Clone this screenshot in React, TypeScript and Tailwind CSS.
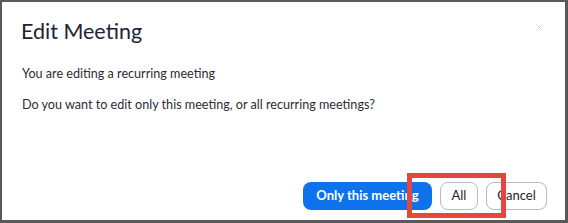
import { X } from "lucide-react";

export default function App() {
  return (
    <div
      className="relative h-[223px] w-[568px] border-b-[3px] border-l-2 border-r-[3px] border-t-2 border-[#595959] bg-white"
      style={{ fontFamily: "Lato, 'Noto Sans', sans-serif" }}
    >
      <div className="flex h-full flex-col">
        <div className="flex items-start justify-between pl-[19px] pr-[20px] pt-[14px]">
          <h1 className="text-[21.5px] leading-[30px] text-[#232333]">Edit Meeting</h1>
          <X size={11} strokeWidth={1.5} className="mt-[6px] text-[#c4c4c4]" />
        </div>
        <div className="mt-[20px] flex flex-col gap-[15px] pl-[20px] text-[12.6px] leading-[16px] text-[#2c2c36]">
          <p>You are editing a recurring meeting</p>
          <p>Do you want to edit only this meeting, or all recurring meetings?</p>
        </div>
        <div className="flex-1" />
        <div className="flex justify-end gap-[8px] pb-[10px] pr-[18px]">
          <button className="h-[28px] w-[129px] rounded-[8px] bg-[#0e72ed] text-[13px] font-bold text-white">
            Only this meeting
          </button>
          <button className="h-[28px] w-[38px] rounded-[8px] border border-[#bab9c9] text-[13px] text-[#232333]">
            All
          </button>
          <button className="h-[28px] w-[61px] rounded-[8px] border border-[#bab9c9] text-[13px] text-[#232333]">
            Cancel
          </button>
        </div>
      </div>
      <div className="pointer-events-none absolute left-[405px] top-[171px] h-[45px] w-[99px] border-[5px] border-[#e8453c]" />
    </div>
  );
}
